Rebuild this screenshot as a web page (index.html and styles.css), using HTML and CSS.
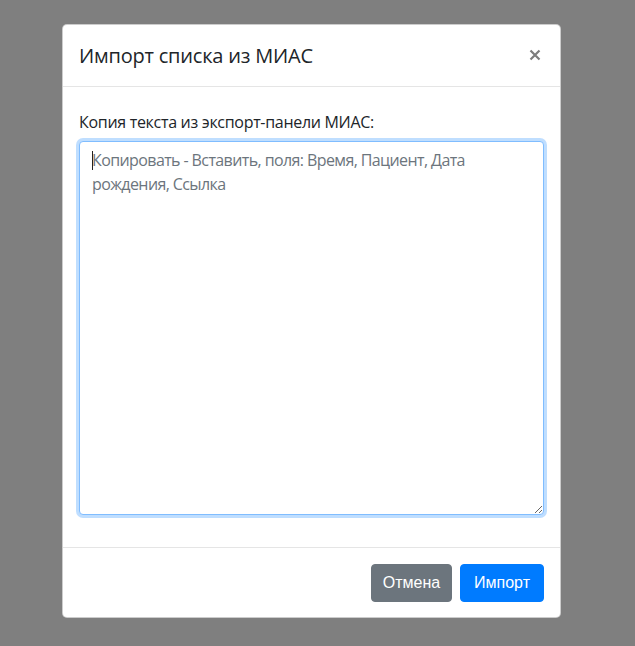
FILE: index.html
```html
<!DOCTYPE html>
<html lang="ru">
<head>
<meta charset="utf-8">
<title>Импорт списка из МИАС</title>
<link rel="stylesheet" href="styles.css">
</head>
<body>
<div class="backdrop">
  <div class="modal">
    <div class="modal-header">
      <h5 class="modal-title">Импорт списка из МИАС</h5>
      <button class="close" type="button" aria-label="Close">
        <svg width="12" height="12" viewBox="0 0 12 12"><path d="M1.5 1.5L10.5 10.5M10.5 1.5L1.5 10.5" stroke="#7d7d7d" stroke-width="2.2" stroke-linecap="butt"/></svg>
      </button>
    </div>
    <div class="modal-body">
      <div class="form-group">
        <label class="label" for="txt">Копия текста из экспорт-панели МИАС:</label>
        <div class="field">
          <textarea id="txt" class="form-control" placeholder="Копировать - Вставить, поля: Время, Пациент, Дата&#10;рождения, Ссылка"></textarea>
          <span class="caret"></span>
        </div>
      </div>
    </div>
    <div class="modal-footer">
      <button class="btn btn-secondary" type="button">Отмена</button>
      <button class="btn btn-primary" type="button">Импорт</button>
    </div>
  </div>
</div>
</body>
</html>
```

FILE: styles.css
```css
html, body {
  margin: 0;
  padding: 0;
  height: 100%;
}
body {
  background: #7f7f7f;
  font-family: "Open Sans", "Noto Sans", sans-serif;
  color: #212529;
  font-size: 16px;
  line-height: 1.5;
}
.backdrop {
  padding: 24px 0 0 62px;
}
.modal {
  width: 499px;
  background: #fff;
  border: 1px solid rgba(0,0,0,.2);
  border-radius: 5px;
  box-sizing: border-box;
  display: flex;
  flex-direction: column;
}
.modal-header {
  display: flex;
  align-items: center;
  justify-content: space-between;
  padding: 16px 16px 15px 16px;
  border-bottom: 1px solid #e5e5e5;
}
.modal-title {
  margin: 0;
  font-size: 20px;
  font-weight: 500;
  line-height: 30px;
  letter-spacing: -0.2px;
  color: #212529;
}
.close {
  border: 0;
  background: transparent;
  padding: 0;
  width: 20px;
  height: 20px;
  display: flex;
  align-items: center;
  justify-content: center;
  margin-right: -1px;
  margin-top: -2px;
  cursor: pointer;
}
.modal-body {
  padding: 23px 16px 16px 16px;
}
.form-group {
  margin-bottom: 16px;
  display: flex;
  flex-direction: column;
}
.label {
  display: block;
  margin-bottom: 7px;
  letter-spacing: -0.3px;
  line-height: 24px;
}
.field {
  position: relative;
}
.form-control {
  display: block;
  width: 100%;
  box-sizing: border-box;
  height: 374px;
  padding: 6px 12px;
  font-family: inherit;
  font-size: 16px;
  line-height: 24px;
  letter-spacing: -0.6px;
  color: #495057;
  background: #fff;
  border: 1px solid #80bdff;
  border-radius: 4px;
  box-shadow: 0 0 0 3px rgba(0,123,255,.25);
  outline: 0;
  resize: vertical;
  margin: 0;
}
.form-control::placeholder {
  color: #6c757d;
  opacity: 1;
}
.caret {
  position: absolute;
  left: 13px;
  top: 10px;
  width: 1px;
  height: 19px;
  background: #222;
}
.modal-footer {
  display: flex;
  justify-content: flex-end;
  align-items: center;
  gap: 8px;
  padding: 16px 16px 15px 16px;
  border-top: 1px solid #e5e5e5;
}
.btn {
  font-family: "Liberation Sans", Arial, sans-serif;
  font-size: 16px;
  line-height: 24px;
  padding: 6px 0;
  border: 1px solid transparent;
  border-radius: 4px;
  color: #fff;
  text-align: center;
  cursor: pointer;
}
.btn-secondary {
  width: 81px;
  background: #6c757d;
  border-color: #6c757d;
}
.btn-primary {
  width: 84px;
  background: #007bff;
  border-color: #007bff;
}
```
